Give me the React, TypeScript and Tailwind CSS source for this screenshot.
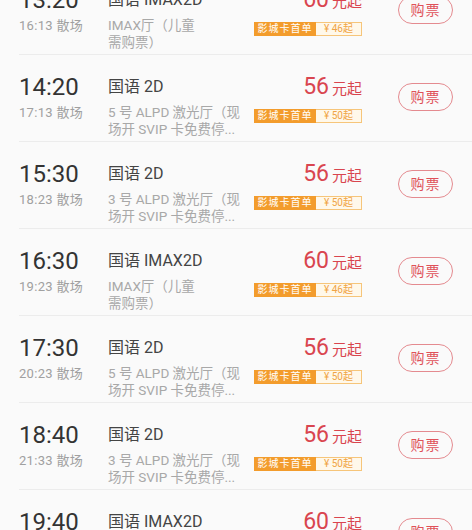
const FONT = { fontFamily: 'Roboto, "Noto Sans CJK SC", sans-serif' }

type Show = {
  start: string
  end: string
  lang: string
  hall: [string, string]
  price: string
  card: string
}

const IMAX: [string, string] = ['IMAX厅（儿童', '需购票）']
const HALL5: [string, string] = ['5 号 ALPD 激光厅（现', '场开 SVIP 卡免费停...']
const HALL3: [string, string] = ['3 号 ALPD 激光厅（现', '场开 SVIP 卡免费停...']

const SHOWS: Show[] = [
  { start: '13:20', end: '16:13', lang: '国语IMAX2D', hall: IMAX, price: '60', card: '46' },
  { start: '14:20', end: '17:13', lang: '国语2D', hall: HALL5, price: '56', card: '50' },
  { start: '15:30', end: '18:23', lang: '国语2D', hall: HALL3, price: '56', card: '50' },
  { start: '16:30', end: '19:23', lang: '国语IMAX2D', hall: IMAX, price: '60', card: '46' },
  { start: '17:30', end: '20:23', lang: '国语2D', hall: HALL5, price: '56', card: '50' },
  { start: '18:40', end: '21:33', lang: '国语2D', hall: HALL3, price: '56', card: '50' },
  { start: '19:40', end: '22:33', lang: '国语IMAX2D', hall: IMAX, price: '60', card: '46' },
]

function Row({ s }: { s: Show }) {
  return (
    <div className="ml-[19px] h-[87px] shrink-0 border-b border-[#ececec] flex items-start">
      {/* time */}
      <div className="w-[89px] shrink-0 pt-[18px]">
        <p className="text-[24px] leading-[28px] text-[#333]">{s.start}</p>
        <p className="mt-[4px] text-[13px] leading-[16px] text-[#a0a0a0] tracking-[0.3px]">{s.end} 散场</p>
      </div>

      {/* hall */}
      <div className="flex-1 min-w-0 pt-[22px]">
        <p className="text-[16px] leading-[20px] text-[#444] whitespace-nowrap">
          {s.lang.replace('国语', '国语 ')}
        </p>
        <div className="mt-[7px] text-[13.5px] leading-[17px] text-[#a8a8a8] whitespace-nowrap">
          <p>{s.hall[0]}</p>
          <p>{s.hall[1]}</p>
        </div>
      </div>

      {/* price */}
      <div className="flex flex-col items-end pt-[19px]">
        <p className="leading-[26px] text-[#d9454f] whitespace-nowrap">
          <span className="text-[23px]">{s.price}</span>
          <span className="ml-[3px] text-[15px]">元起</span>
        </p>
        <div className="mt-[7px] flex h-[14px] text-[10px] leading-[14px] whitespace-nowrap">
          <span className="w-[62px] bg-[#f39c2c] text-white text-center tracking-[1px]">影城卡首单</span>
          <span className="w-[46px] border border-l-0 border-[#f6c57a] bg-[#fff8ea] text-[#f0a445] text-center leading-[12px]">
            ¥ {s.card}起
          </span>
        </div>
      </div>

      {/* button */}
      <button className="ml-[36px] mr-[19px] mt-[28px] w-[55px] h-[28px] shrink-0 rounded-full border border-[#e48a8f] text-[14px] text-[#df5159] tracking-[1px] flex items-center justify-center">
        购票
      </button>
    </div>
  )
}

export default function App() {
  return (
    <div className="w-[472px] h-[530px] overflow-hidden bg-[#fafafa]" style={FONT}>
      <div className="-mt-[32px] flex flex-col">
        {SHOWS.map((s) => (
          <Row key={s.start} s={s} />
        ))}
      </div>
    </div>
  )
}
